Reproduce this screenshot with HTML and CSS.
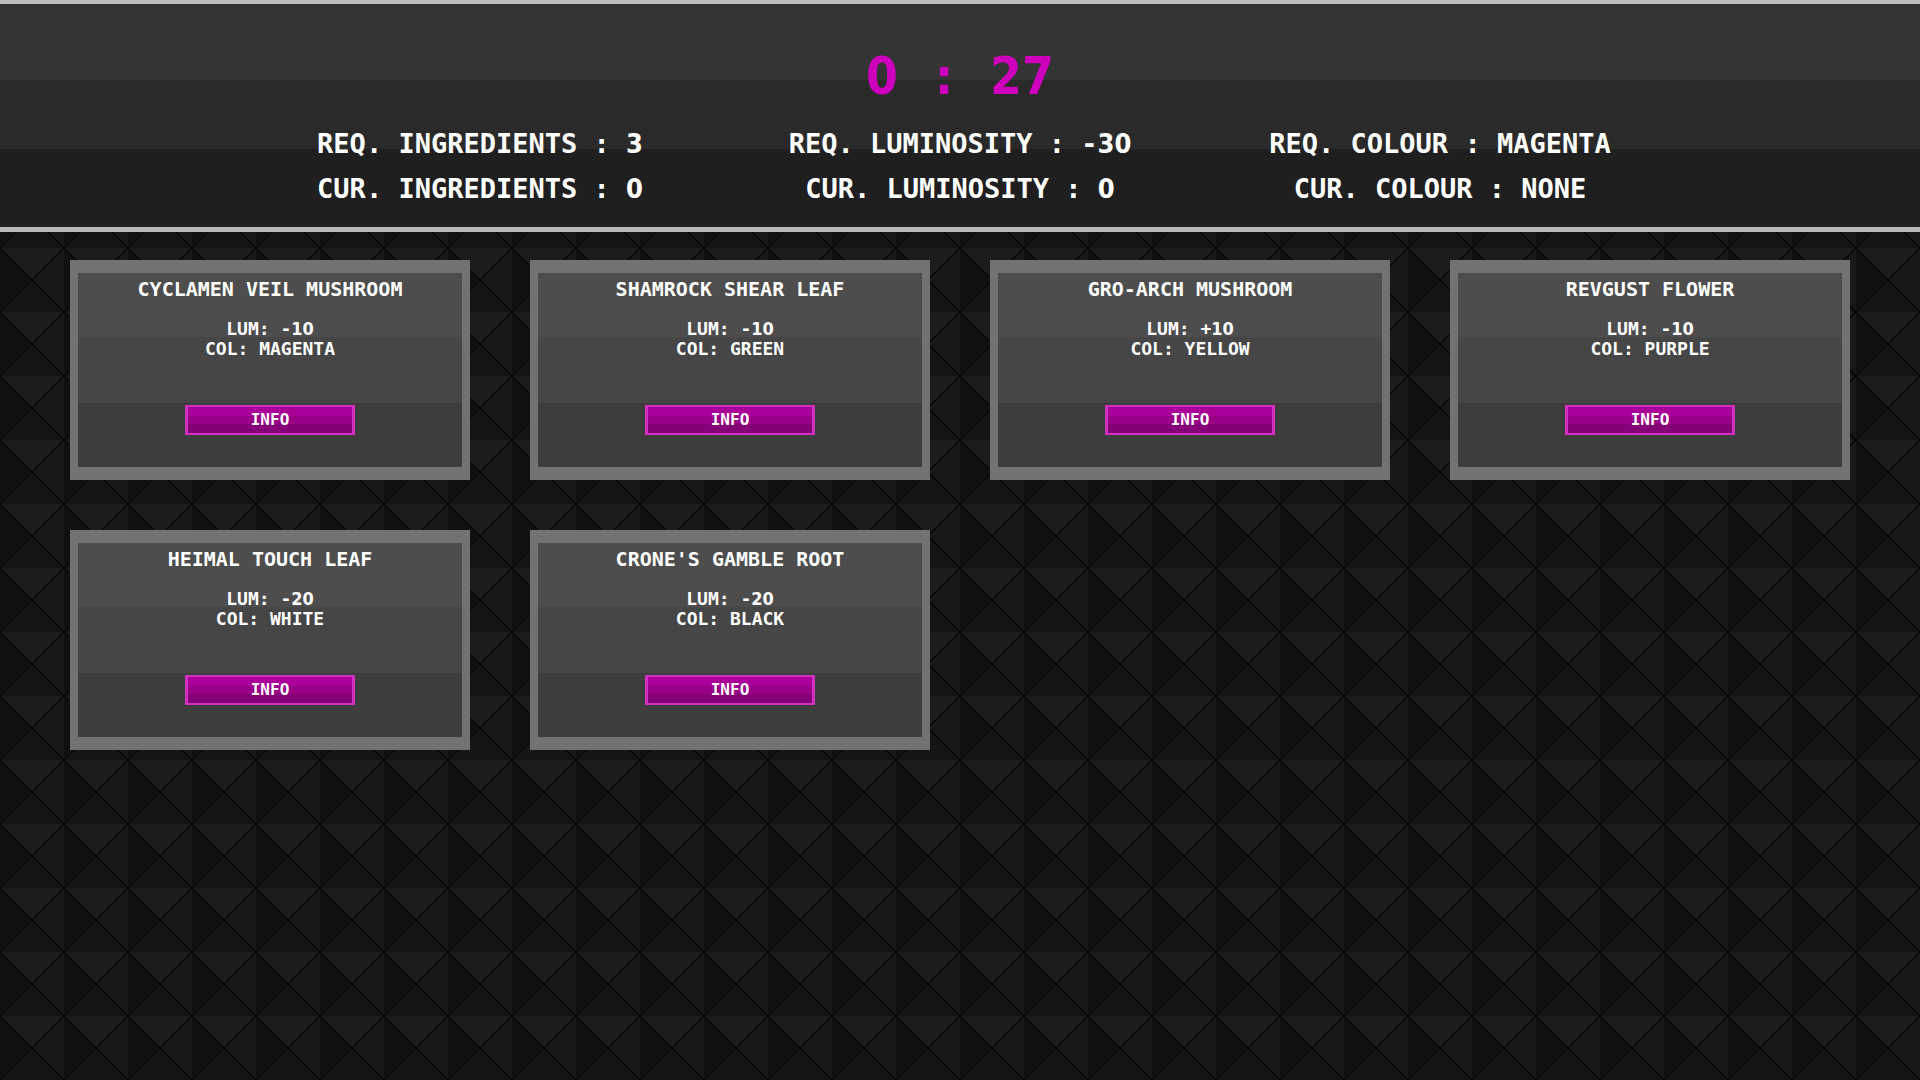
FILE: index.html
```html
<!DOCTYPE html>
<html lang="en">
<head>
<meta charset="utf-8">
<meta name="viewport" content="width=device-width, initial-scale=1">
<title>Ingredients</title>
<link rel="stylesheet" href="styles.css">
</head>
<body>
<header class="status">
  <div class="timer" role="timer"><span class="num">0</span> : <span class="num">27</span></div>
  <div class="stats">
    <div class="stat">
      <p>REQ. INGREDIENTS : <span class="num">3</span></p>
      <p>CUR. INGREDIENTS : <span class="num">0</span></p>
    </div>
    <div class="stat">
      <p>REQ. LUMINOSITY : -<span class="num">30</span></p>
      <p>CUR. LUMINOSITY : <span class="num">0</span></p>
    </div>
    <div class="stat">
      <p>REQ. COLOUR : MAGENTA</p>
      <p>CUR. COLOUR : NONE</p>
    </div>
  </div>
</header>
<main class="cards">
  <article class="card">
    <h2>CYCLAMEN VEIL MUSHROOM</h2>
    <p>LUM: -<span class="num">10</span></p>
    <p>COL: MAGENTA</p>
    <button type="button" class="info">INFO</button>
  </article>
  <article class="card">
    <h2>SHAMROCK SHEAR LEAF</h2>
    <p>LUM: -<span class="num">10</span></p>
    <p>COL: GREEN</p>
    <button type="button" class="info">INFO</button>
  </article>
  <article class="card">
    <h2>GRO-ARCH MUSHROOM</h2>
    <p>LUM: +<span class="num">10</span></p>
    <p>COL: YELLOW</p>
    <button type="button" class="info">INFO</button>
  </article>
  <article class="card">
    <h2>REVGUST FLOWER</h2>
    <p>LUM: -<span class="num">10</span></p>
    <p>COL: PURPLE</p>
    <button type="button" class="info">INFO</button>
  </article>
  <article class="card">
    <h2>HEIMAL TOUCH LEAF</h2>
    <p>LUM: -<span class="num">20</span></p>
    <p>COL: WHITE</p>
    <button type="button" class="info">INFO</button>
  </article>
  <article class="card">
    <h2>CRONE'S GAMBLE ROOT</h2>
    <p>LUM: -<span class="num">20</span></p>
    <p>COL: BLACK</p>
    <button type="button" class="info">INFO</button>
  </article>
</main>
</body>
</html>
```
FILE: styles.css
```css
* {
  box-sizing: border-box;
}

body {
  margin: 0;
  min-height: 100vh;
  color: #fff;
  font-family: "DejaVu Sans Mono", "Liberation Mono", monospace;
  font-weight: bold;
  /* pyramid studs: two dark diagonals over four shaded faces */
  background-color: #151515;
  background-image:
    linear-gradient(45deg, transparent 49%, #0b0b0b 49%, #0b0b0b 51%, transparent 51%),
    linear-gradient(-45deg, transparent 49%, #0b0b0b 49%, #0b0b0b 51%, transparent 51%),
    conic-gradient(from -45deg, #1c1c1c 25%, #191919 25% 50%, #151515 50% 75%, #101010 75%);
  background-size: 64px 64px;
  background-position: 0 56px;
}

h2,
p {
  margin: 0;
  font: inherit;
}

/* undotted zero */
.num {
  font-family: "DejaVu Sans Condensed", "DejaVu Sans", sans-serif;
}

.status {
  display: flex;
  flex-direction: column;
  align-items: center;
  padding: 43px 0 16px;
  border-top: 4px solid #bebebe;
  border-bottom: 5px solid #b9b9b9;
  background: linear-gradient(#343434 34%, #2a2a2a 34% 65%, #1f1f1f 65%);
}

.timer {
  color: #cf00bd;
  font-size: 51px;
  line-height: 60px;
  margin-bottom: 14px;
}

.stats {
  display: grid;
  grid-template-columns: repeat(3, 1fr);
  width: 75%;
  font-size: 27px;
  line-height: 45px;
  text-align: center;
  white-space: nowrap;
}

.cards {
  display: grid;
  grid-template-columns: repeat(4, 1fr);
  gap: 50px 60px;
  padding: 28px 70px;
}

.card {
  display: flex;
  flex-direction: column;
  align-items: center;
  padding: 6px 0 32px;
  border: solid #727272;
  border-width: 13px 8px;
  background: linear-gradient(#4d4d4d 33%, #464646 33% 67%, #3c3d3c 67%);
  font-size: 18px;
  line-height: 20px;
}

.card h2 {
  margin-bottom: 20px;
  font-size: 20px;
}

.info {
  width: 170px;
  height: 30px;
  margin-top: 46px;
  padding: 0;
  border: solid #d132c0;
  border-width: 2px 3px;
  background: linear-gradient(#aa0099 35%, #980088 35% 67%, #850077 67%);
  color: #fff;
  font: inherit;
  font-size: 16px;
  cursor: pointer;
}
```
